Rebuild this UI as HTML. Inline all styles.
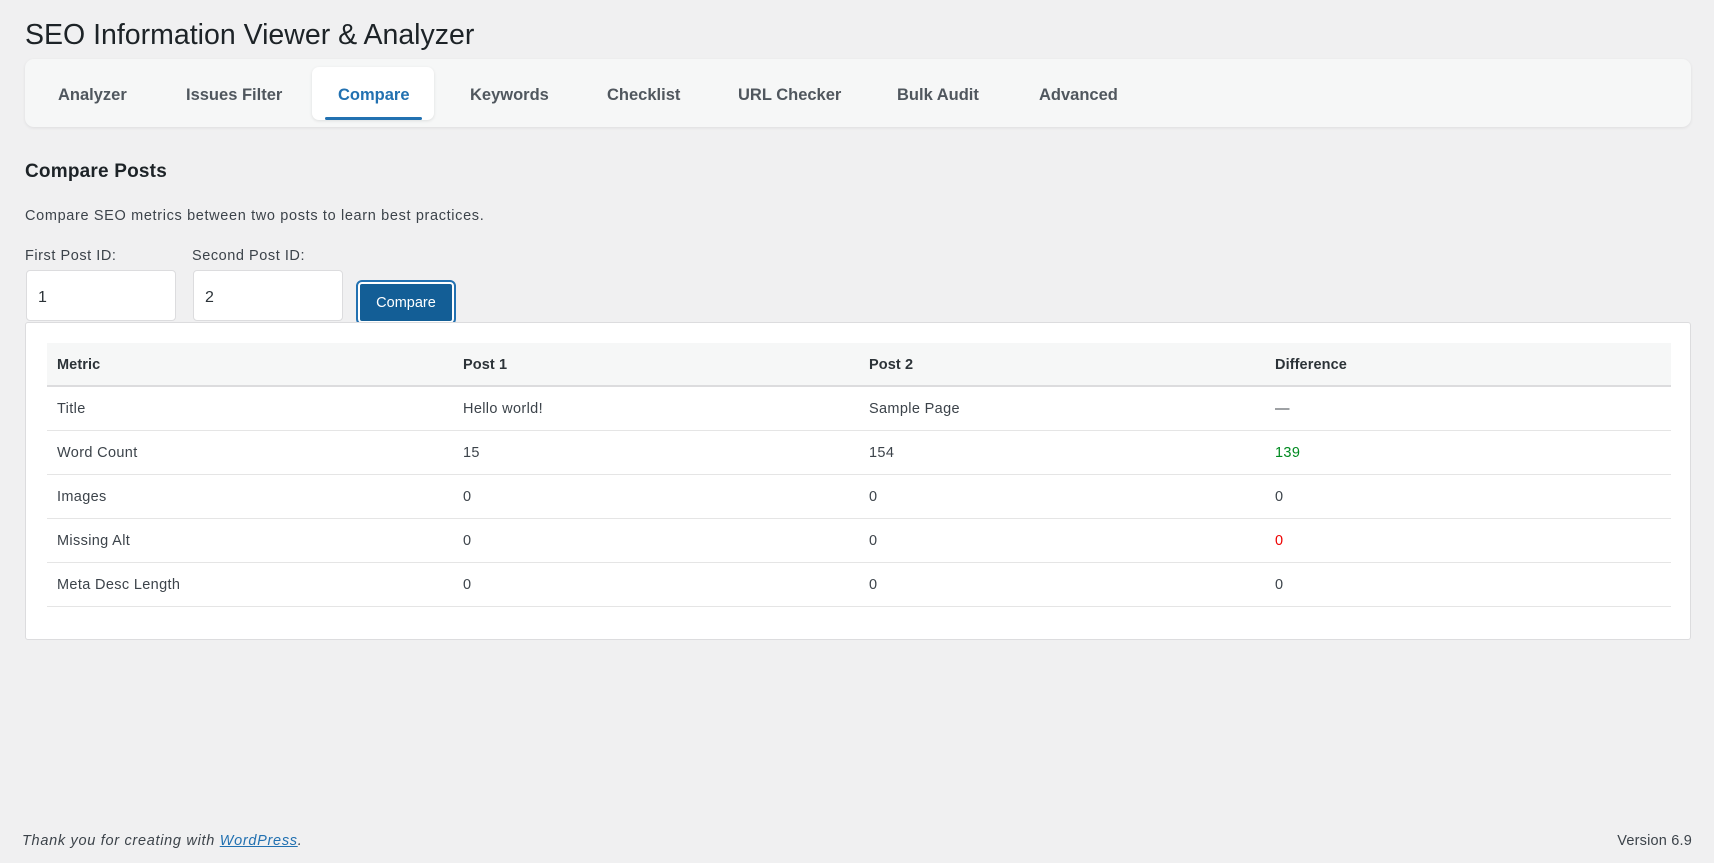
<!DOCTYPE html>
<html><head><meta charset="utf-8"><style>
*{box-sizing:border-box;margin:0;padding:0}
body{width:1714px;height:863px;background:#f0f0f1;font-family:"Liberation Sans",sans-serif;color:#3c434a;font-size:14px;position:relative;overflow:hidden}
.a{position:absolute}
h1{position:absolute;left:25px;top:19px;font-size:28.5px;font-weight:400;color:#1d2327}
.tabs{left:25px;top:59px;width:1666px;height:68px;background:#f6f7f7;border-radius:9px;box-shadow:0 1px 3px rgba(0,0,0,.08)}
.tab{position:absolute;top:27px;font-size:16.5px;font-weight:bold;color:#50575e}
.act{position:absolute;left:312px;top:67px;width:122px;height:53px;background:#fff;border-radius:7px;box-shadow:0 1px 3px rgba(0,0,0,.1)}
.ul{position:absolute;left:325px;top:117px;width:97px;height:3px;background:#2271b1;border-radius:2px}
h2{position:absolute;left:25px;top:161px;font-size:19px;font-weight:bold;color:#1d2327;letter-spacing:0.2px}
.inp{position:absolute;top:270px;height:51px;background:#fff;border:1px solid #dcdcde;border-radius:4px;font-size:16px;padding:18px 0 0 11px;color:#2c3338}
.btn{position:absolute;left:358px;top:282px;width:96px;height:41px;background:#135e96;border:2px solid #fff;outline:2px solid #2271b1;border-radius:4px;color:#fff;font-size:14.5px;text-align:center;line-height:38px}
.card{left:25px;top:322px;width:1666px;height:318px;background:#fff;border:1px solid #dcdcde;border-radius:3px}
table{position:absolute;left:21px;top:20px;width:1624px;border-collapse:collapse}
td,th{height:44px;text-align:left;padding-left:10px;padding-top:2px;border-bottom:1px solid #e5e5e5;font-size:14.5px;vertical-align:middle;letter-spacing:0.35px}
th{background:#f6f7f7;font-weight:bold;color:#2c3338;border-bottom:2px solid #dcdcde;height:43px;letter-spacing:0.1px}
.c1{width:406px}.c2{width:406px}.c3{width:406px}
.t{font-size:14.5px;letter-spacing:0.55px}
</style></head><body>
<h1>SEO Information Viewer &amp; Analyzer</h1>
<div class="a tabs">
<span class="tab" style="left:33px">Analyzer</span>
<span class="tab" style="left:161px">Issues Filter</span>
<span class="tab" style="left:445px">Keywords</span>
<span class="tab" style="left:582px">Checklist</span>
<span class="tab" style="left:713px">URL Checker</span>
<span class="tab" style="left:872px">Bulk Audit</span>
<span class="tab" style="left:1014px">Advanced</span>
</div>
<div class="act"></div>
<span class="tab" style="left:338px;top:86px;color:#2271b1">Compare</span>
<div class="ul"></div>
<h2>Compare Posts</h2>
<div class="a t" style="left:25px;top:208px;letter-spacing:0.65px">Compare SEO metrics between two posts to learn best practices.</div>
<div class="a t" style="left:25px;top:248px">First Post ID:</div>
<div class="a t" style="left:192px;top:248px">Second Post ID:</div>
<div class="inp" style="left:26px;width:150px">1</div>
<div class="inp" style="left:193px;width:150px">2</div>
<div class="btn">Compare</div>
<div class="a card">
<table>
<tr><th class="c1">Metric</th><th class="c2">Post 1</th><th class="c3">Post 2</th><th>Difference</th></tr>
<tr><td>Title</td><td>Hello world!</td><td>Sample Page</td><td>—</td></tr>
<tr><td>Word Count</td><td>15</td><td>154</td><td style="color:#008a20">139</td></tr>
<tr><td>Images</td><td>0</td><td>0</td><td>0</td></tr>
<tr><td>Missing Alt</td><td>0</td><td>0</td><td style="color:#e00">0</td></tr>
<tr><td>Meta Desc Length</td><td>0</td><td>0</td><td>0</td></tr>
</table>
</div>
<div class="a t" style="left:22px;top:833px;font-style:italic;letter-spacing:0.7px">Thank you for creating with <span style="color:#2271b1;text-decoration:underline">WordPress</span>.</div>
<div class="a t" style="right:22px;top:833px;letter-spacing:0.2px">Version 6.9</div>
</body></html>
